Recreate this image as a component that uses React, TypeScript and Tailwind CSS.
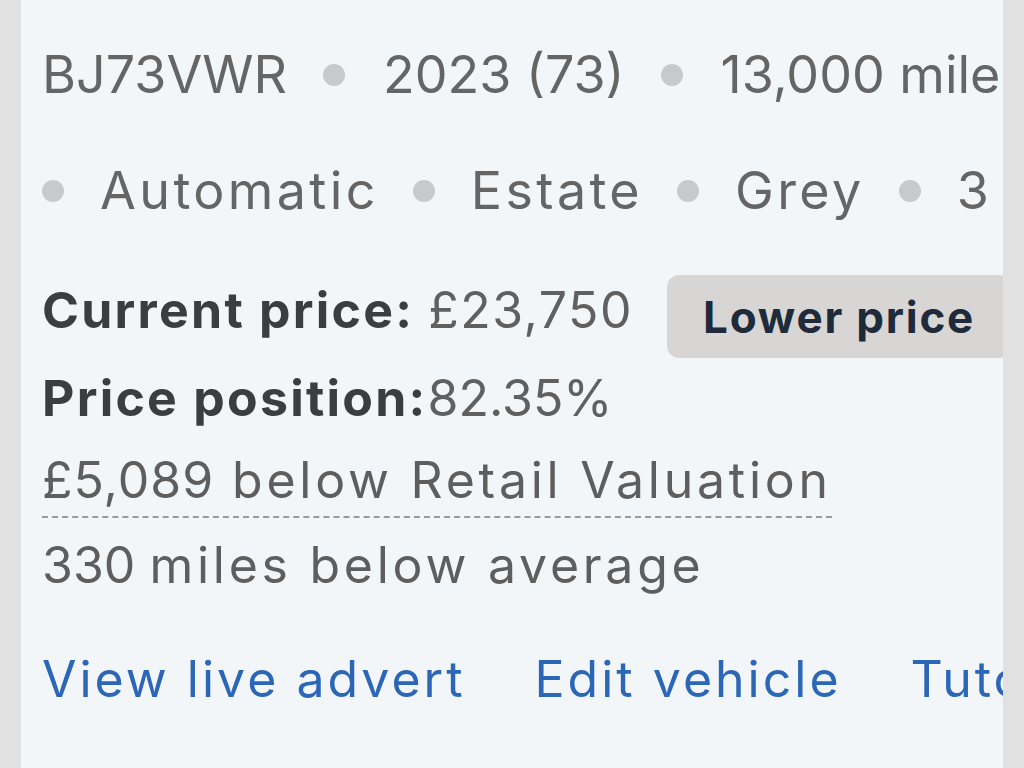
const font = { fontFamily: 'Inter, "Noto Sans", sans-serif' };

function Dot() {
  return <span className="block h-[22px] w-[22px] shrink-0 rounded-full bg-[#c6cacd]" />;
}

const specsTop = ['BJ73VWR', '2023 (73)', '13,000 miles'];
const specsBottom = ['Automatic', 'Estate', 'Grey', '3 owners'];

export default function App() {
  return (
    <div className="min-h-screen w-full bg-[#e1e1e1] px-[21px]" style={font}>
      <div className="h-[768px] overflow-hidden bg-[#f3f6f8] pl-[21px]">
        {/* spec chips */}
        <div className="mt-[45px] flex h-[60px] items-center gap-[36px] whitespace-nowrap text-[52px] text-[#656565]">
          {specsTop.map((s, i) => (
            <div key={s} className="flex items-center gap-[38px]">
              {i > 0 && <Dot />}
              <span>{s}</span>
            </div>
          ))}
        </div>
        <div className="mt-[56px] flex h-[60px] items-center gap-[34px] whitespace-nowrap text-[52px] text-[#656565]">
          {specsBottom.map((s) => (
            <div key={s} className="flex items-center gap-[36px]">
              <Dot />
              <span className="tracking-[0.065em]">{s}</span>
            </div>
          ))}
        </div>

        {/* price block */}
        <div className="mt-[54px] flex h-[83px] items-center whitespace-nowrap">
          <div className="mb-[12px] text-[50px] text-[#606060]">
            <span className="font-bold tracking-[0.045em] text-[#3c3d3f]">Current price:</span>{' '}
            <span className="tracking-[0.03em]">£23,750</span>
          </div>
          <button className="ml-[34px] flex h-[83px] shrink-0 items-center rounded-[12px] bg-[#d7d6d4] px-[36px] text-[44px] font-bold tracking-[0.04em] text-[#1f2a3a]">
            Lower price
          </button>
        </div>
        <div className="mt-[10px] flex h-[60px] items-center whitespace-nowrap text-[50px] text-[#606060]">
          <span className="font-bold tracking-[0.045em] text-[#3c3d3f]">Price position:</span>
          <span>82.35%</span>
        </div>
        <div className="mt-[22px] inline-flex h-[68px] items-center border-b-2 border-dashed border-[#9a9a9a] pb-[6px] text-[50px] whitespace-nowrap text-[#5e5e5e]">
          <span className="tracking-[0.02em]">£5,089</span>
          <span className="tracking-[0.075em]">&nbsp;below Retail Valuation</span>
        </div>
        <div className="mt-[17px] flex h-[60px] items-center whitespace-nowrap text-[50px] text-[#5e5e5e]">
          <span>330&nbsp;</span>
          <span className="tracking-[0.075em]">miles below average</span>
        </div>

        {/* actions */}
        <div className="mt-[54px] flex h-[60px] items-center gap-[69px] whitespace-nowrap text-[50px] tracking-[0.06em] text-[#2c66b6]">
          <a href="#">View live advert</a>
          <a href="#">Edit vehicle</a>
          <a href="#">Tutorial</a>
        </div>
      </div>
    </div>
  );
}
